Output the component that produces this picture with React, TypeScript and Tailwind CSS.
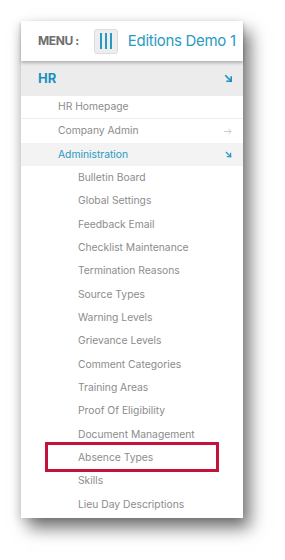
import React from "react"

const items: { label: string; level: number; active?: boolean; arrow?: "right" | "down"; divider?: boolean }[] = [
  { label: "HR Homepage", level: 1, divider: true },
  { label: "Company Admin", level: 1, arrow: "right" },
  { label: "Administration", level: 1, active: true, arrow: "down" },
  { label: "Bulletin Board", level: 2 },
  { label: "Global Settings", level: 2 },
  { label: "Feedback Email", level: 2 },
  { label: "Checklist Maintenance", level: 2 },
  { label: "Termination Reasons", level: 2 },
  { label: "Source Types", level: 2 },
  { label: "Warning Levels", level: 2 },
  { label: "Grievance Levels", level: 2 },
  { label: "Comment Categories", level: 2 },
  { label: "Training Areas", level: 2 },
  { label: "Proof Of Eligibility", level: 2 },
  { label: "Document Management", level: 2 },
  { label: "Absence Types", level: 2 },
  { label: "Skills", level: 2 },
  { label: "Lieu Day Descriptions", level: 2 },
]

function ArrowDown({ className }: { className?: string }) {
  return (
    <svg viewBox="0 0 10 10" className={className} fill="none" stroke="currentColor" strokeWidth="1.8" strokeLinecap="square">
      <path d="M2 2 L8 8" />
      <path d="M8 3.5 V8 H3.5" />
    </svg>
  )
}

function ArrowRight({ className }: { className?: string }) {
  return (
    <svg viewBox="0 0 10 10" className={className} fill="none" stroke="currentColor" strokeWidth="1">
      <path d="M1 5 H9" />
      <path d="M6 2 L9 5 L6 8" />
    </svg>
  )
}

export default function App() {
  return (
    <div className="w-[285px] h-[560px] bg-white overflow-hidden" style={{ fontFamily: "Inter, 'Noto Sans', sans-serif" }}>
      <div className="relative ml-[21px] mt-[21px] w-[222px] bg-white shadow-[7px_10px_16px_rgba(0,0,0,0.55),-3px_2px_8px_rgba(0,0,0,0.1)]">

        {/* HEADER */}
        <div className="relative z-10 h-[40px] flex items-center bg-white shadow-[0_2px_3px_rgba(0,0,0,0.25)]">
          <span className="shrink-0 whitespace-nowrap ml-[17px] text-[12px] font-bold text-[#6e6e6e] tracking-[-0.4px]">MENU :</span>
          <div className="shrink-0 ml-[15px] w-[24px] h-[25px] rounded-[3px] bg-[#eeeeee] border border-[#dddddd] flex items-center justify-center gap-[3px]">
            <span className="w-[2px] h-[16px] bg-[#2a9ac2]" />
            <span className="w-[2px] h-[16px] bg-[#2a9ac2]" />
            <span className="w-[2px] h-[16px] bg-[#2a9ac2]" />
          </div>
          <span className="shrink-0 ml-[10px] text-[15px] text-[#2a9ac2] whitespace-nowrap tracking-[-0.3px]">Editions Demo 1</span>
        </div>

        {/* HR SECTION */}
        <div className="h-[35px] flex items-center justify-between bg-[#ececec] pl-[17px] pr-[10px]">
          <span className="text-[13px] font-bold text-[#1b90bd]">HR</span>
          <ArrowDown className="w-[9px] h-[9px] text-[#1b90bd]" />
        </div>

        {/* ITEMS */}
        <div className="pb-[2px]">
          {items.map((item) => (
            <div
              key={item.label}
              className={
                "h-[23.35px] flex items-center justify-between pr-[11px] text-[10.3px] " +
                (item.level === 1 ? "pl-[37px] " : "pl-[57px] ") +
                (item.active ? "bg-[#f3f3f3] text-[#2a9ac2] " : "text-[#8c8c8c] ") +
                (item.divider ? "border-b border-[#ededed]" : "")
              }
            >
              <span className="whitespace-nowrap">{item.label}</span>
              {item.arrow === "right" && <ArrowRight className="w-[9px] h-[9px] text-[#c4c4c4]" />}
              {item.arrow === "down" && <ArrowDown className="w-[7px] h-[7px] text-[#2a9ac2]" />}
            </div>
          ))}
        </div>

        {/* HIGHLIGHT ANNOTATION */}
        <div className="absolute left-[24px] top-[421px] w-[174px] h-[30px] border-[3px] border-[#c4123d]" />
      </div>
    </div>
  )
}
